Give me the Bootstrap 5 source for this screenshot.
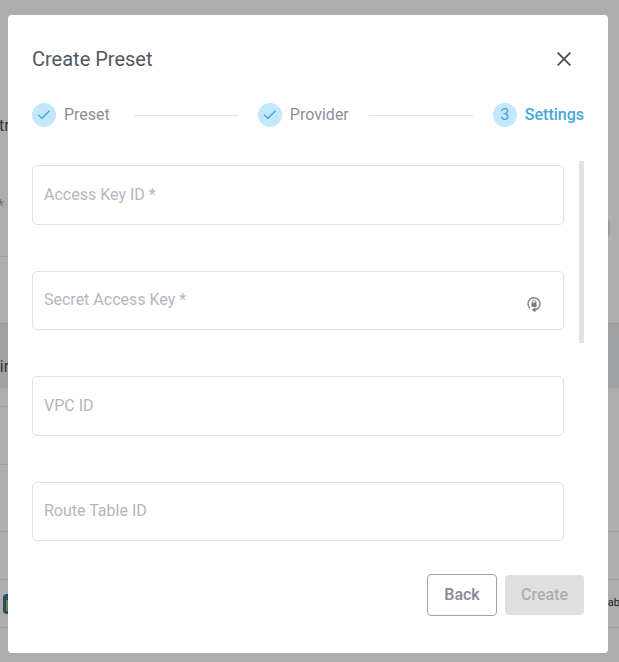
<!DOCTYPE html>
<html lang="en">
<head>
<meta charset="utf-8">
<meta name="viewport" content="width=device-width, initial-scale=1">
<title>Create Preset</title>
<link rel="stylesheet" href="https://cdn.jsdelivr.net/npm/bootstrap@5.3.0/dist/css/bootstrap.min.css">
<style>
body{font-family:Roboto,"Liberation Sans",sans-serif;background:#adadad;height:662px;font-size:16px}
.page{height:662px}
.line{border-bottom:1px solid #9e9e9e}
.r1{height:257px;width:300px}
.r2{height:66px}
.band{height:65px;background:#a0a1a3;border-top:1px solid #989899}
.r3{height:19px;width:300px}.r4{height:58px;width:300px}.r5{height:67px}.r6,.r7{height:48px}
.bgtext{color:#30333b;line-height:20px;white-space:nowrap}
.cut-a{padding-top:116px;margin-left:-1px}
.cut-b{padding-top:60px;margin-left:-3px;color:#777;line-height:20px}
.cut-c{padding-top:33px;margin-left:-9px}
.cut-d{font-size:11px;color:#222;width:16px;direction:rtl;margin-right:-1px}
.chip{width:10px;height:16px;background:#9b9b9b;border-radius:3px;margin:220px 9px 0 0}
.logo-bg{width:20px;height:20px;background:#33476b;border-radius:4px;margin-left:3px;padding:6px 3px 3px}
.logo-bg span{background:#5c8c3b}
.dialog-box{left:8px;top:15px;width:600px;height:638px;border-radius:4px;padding:24px}
.dialog-title{font-size:20px;line-height:40px;color:#515761;font-weight:400}
.close-btn{width:40px;height:40px}
.steps{height:24px;margin-top:24px;color:#8a8f99;line-height:24px}
.dot{width:24px;height:24px;background:#c1e8fc;color:#47a6db;margin-right:8px;font-size:16px}
.rule{height:1px;background:#e1e2e4;margin:0 20px 0 24px;position:relative}
.rule.second{margin-left:20px}
.active-step{color:#47a6db;font-weight:500}
.fields{margin-top:34px;height:380px;padding-right:5px}
.fields-list{width:532px;padding-top:4px}
.field{height:59.5px;border:1px solid #e1e1e3;border-radius:5px;margin-bottom:46px;padding:0 22px 0 11px;color:#b3b6bf}
.thumb{width:5px;height:182px;background:#e2e2e2;margin-right:-5px}
.actions{margin-top:33px;height:42px}
.actions .btn{font-weight:500;line-height:24px;padding:0;border-radius:4px}
.back{width:70px;height:42px;border:1px solid #9da2ac;color:#848a95}
.create,.create:disabled{width:79px;height:40px;background:#e0e0e0;color:#adadad;opacity:1;border:0}
</style>
<script src="https://cdn.jsdelivr.net/npm/bootstrap@5.3.0/dist/js/bootstrap.bundle.min.js"></script>
</head>
<body class="overflow-hidden position-relative">
<div class="page overflow-hidden" aria-hidden="true">
  <div class="d-flex justify-content-between">
    <div class="r1 line bgtext"><div class="cut-a">tr</div><div class="cut-b">*</div></div>
    <div class="chip"></div>
  </div>
  <div class="r2"></div>
  <div class="band bgtext"><div class="cut-c">nin</div></div>
  <div class="r3 line"></div>
  <div class="r4 line"></div>
  <div class="r5 line"></div>
  <div class="r6 line"></div>
  <div class="r7 line d-flex align-items-center justify-content-between">
    <div class="logo-bg d-flex"><span class="flex-fill"></span></div>
    <div class="cut-d">bab</div>
  </div>
</div>

<main class="dialog-box bg-white position-absolute" role="dialog" aria-labelledby="dialog-title">
  <header class="d-flex justify-content-between">
    <h1 id="dialog-title" class="dialog-title mb-0">Create Preset</h1>
    <button class="close-btn btn p-0 border-0 d-flex align-items-center justify-content-center" aria-label="Close">
      <svg width="14" height="14" viewBox="0 0 14 14" fill="none" stroke="#484c55" stroke-width="1.8"><path d="M.7.7 13.3 13.3M13.3.7.7 13.3"/></svg>
    </button>
  </header>
  <div class="steps d-flex align-items-center">
    <span class="dot rounded-circle d-flex align-items-center justify-content-center"><svg width="14" height="12" viewBox="0 0 14 12" fill="none" stroke="#47a6db" stroke-width="1.4"><path d="M1.2 5.8 4.9 9.3 12.5 1.8"/></svg></span>
    <span>Preset</span><span class="rule flex-fill"></span>
    <span class="dot rounded-circle d-flex align-items-center justify-content-center"><svg width="14" height="12" viewBox="0 0 14 12" fill="none" stroke="#47a6db" stroke-width="1.4"><path d="M1.2 5.8 4.9 9.3 12.5 1.8"/></svg></span>
    <span>Provider</span><span class="rule second flex-fill"></span>
    <span class="dot rounded-circle d-flex align-items-center justify-content-center">3</span>
    <span class="active-step">Settings</span>
  </div>
  <section class="fields d-flex justify-content-between overflow-visible">
    <div class="fields-list">
      <div class="field d-flex align-items-center">Access Key ID *</div>
      <div class="field d-flex align-items-center justify-content-between">Secret Access Key *
        <svg class="mt-2" width="14" height="17" viewBox="0 0 14 17" fill="none"><path d="M2.8 12.1A6 6 0 1 1 11.2 12.1Q9.8 13.5 8 13.7" stroke="#858585" stroke-width="1.5"/><path d="M8.4 11.2v5L4.8 13.7z" fill="#777"/><path d="M4.5 6.7h5v4.2h-5z" fill="#777"/><path d="M5.4 7V5.7a1.6 1.6 0 0 1 3.2 0V7" stroke="#858585"/></svg>
      </div>
      <div class="field d-flex align-items-center">VPC ID</div>
      <div class="field d-flex align-items-center mb-0">Route Table ID</div>
    </div>
    <div class="thumb"></div>
  </section>
  <footer class="actions d-flex justify-content-end align-items-center gap-2">
    <button class="btn back">Back</button>
    <button class="btn create" disabled>Create</button>
  </footer>
</main>
</body>
</html>
